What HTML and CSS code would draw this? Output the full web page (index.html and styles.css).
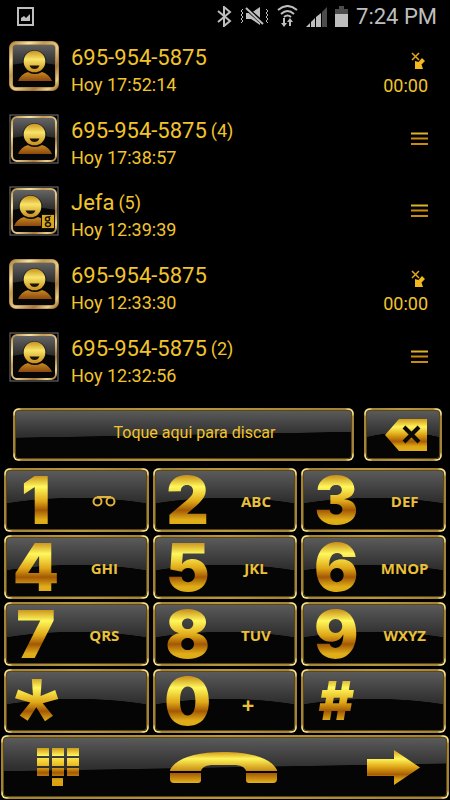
FILE: index.html
```html
<!DOCTYPE html>
<html lang="es">
  <head>
    <meta charset="utf-8">
    <meta name="viewport" content="width=device-width, initial-scale=1">
    <link rel="stylesheet" href="styles.css">
    <title>Teléfono</title>
  </head>
  <body>
    <!-- shared gradients and symbols -->
    <svg class="defs" aria-hidden="true">
      <defs>
        <linearGradient id="gold" x1="0" y1="0" x2="0" y2="1">
          <stop offset="0" stop-color="#d09a18"/>
          <stop offset=".25" stop-color="#fff45a"/>
          <stop offset=".5" stop-color="#dca114"/>
          <stop offset=".7" stop-color="#a85d05"/>
          <stop offset=".85" stop-color="#dba514"/>
          <stop offset="1" stop-color="#e0b01c"/>
        </linearGradient>
        <linearGradient id="keys" gradientUnits="userSpaceOnUse" x1="0" y1="0" x2="0" y2="38">
          <stop offset="0" stop-color="#d09a18"/>
          <stop offset=".2" stop-color="#fff45a"/>
          <stop offset=".48" stop-color="#e8b41a"/>
          <stop offset=".65" stop-color="#a35804"/>
          <stop offset=".85" stop-color="#dba514"/>
          <stop offset="1" stop-color="#d8a010"/>
        </linearGradient>
        <linearGradient id="handset" x1="0" y1="0" x2="0" y2="1">
          <stop offset="0" stop-color="#d09a18"/>
          <stop offset=".35" stop-color="#fff45a"/>
          <stop offset="1" stop-color="#c88a10"/>
        </linearGradient>
        <linearGradient id="handset-ends" x1="0" y1="0" x2="0" y2="1">
          <stop offset="0" stop-color="#a35804"/>
          <stop offset="1" stop-color="#e4b41c"/>
        </linearGradient>
        <linearGradient id="head" x1="0" y1="0" x2="0" y2="1">
          <stop offset="0" stop-color="#c8921e"/>
          <stop offset=".4" stop-color="#f8e468"/>
          <stop offset="1" stop-color="#c98c1c"/>
        </linearGradient>
        <linearGradient id="shoulders" x1="0" y1="0" x2="0" y2="1">
          <stop offset="0" stop-color="#c88a20"/>
          <stop offset="1" stop-color="#8c4810"/>
        </linearGradient>
        <linearGradient id="frame" x1="0" y1="0" x2="1" y2="1">
          <stop offset="0" stop-color="#b08a44"/>
          <stop offset=".2" stop-color="#f6e4a0"/>
          <stop offset=".35" stop-color="#c29a50"/>
          <stop offset=".55" stop-color="#e8cc88"/>
          <stop offset=".75" stop-color="#a8793c"/>
          <stop offset=".9" stop-color="#ecd288"/>
          <stop offset="1" stop-color="#a07434"/>
        </linearGradient>
        <linearGradient id="gloss" x1="0" y1="0" x2="0" y2="1">
          <stop offset="0" stop-color="#686868"/>
          <stop offset=".5" stop-color="#262626"/>
          <stop offset="1" stop-color="#101010"/>
        </linearGradient>
      </defs>
      <symbol id="person" viewBox="0 0 34 31">
        <path d="M0 31Q3 24 10 22Q17 26 24 22Q31 24 34 31Z" fill="url(#shoulders)"/>
        <circle cx="16.500" cy="12" r="12" fill="#0c0c0c" opacity=".5"/>
        <circle cx="16.500" cy="11.500" r="10.800" fill="url(#head)"/>
        <path d="M11.500 15.500H21.500Q20 19 16.500 19Q13 19 11.500 15.500Z" fill="#1b1508"/>
      </symbol>
      <symbol id="avatar" viewBox="0 0 50 50">
        <rect x="2" y="2" width="46" height="46" rx="5" fill="url(#gloss)"/>
        <path d="M2 24Q25 19 48 24V43Q48 48 43 48H7Q2 48 2 43Z" fill="#060606"/>
        <rect x="2" y="2" width="46" height="46" rx="5" fill="none" stroke="#9a7234" stroke-width="4"/>
        <rect x="2" y="2" width="46" height="46" rx="5" fill="none" stroke="url(#frame)" stroke-width="3"/>
        <use href="#person" x="9" y="9" width="34" height="31"/>
      </symbol>
      <symbol id="avatar-boxed" viewBox="0 0 50 50">
        <rect x="1" y="1" width="48" height="48" fill="#000" stroke="#777"/>
        <rect x="3" y="3" width="44" height="44" rx="5" fill="url(#gloss)"/>
        <path d="M3 24Q25 19 47 24V42Q47 47 42 47H8Q3 47 3 42Z" fill="#060606"/>
        <rect x="3" y="3" width="44" height="44" rx="5" fill="none" stroke="url(#frame)" stroke-width="2"/>
      </symbol>
      <symbol id="missed" viewBox="0 0 17 18">
        <path d="M1 1L8 8M8 1L1 8" stroke="#e3a81c" stroke-width="1.500" fill="none"/>
        <path d="M11 6L14 9L10.500 12.500L12 17H4V9L7.500 10Z" fill="#f2b81e"/>
      </symbol>
      <symbol id="menu" viewBox="0 0 17 14">
        <path d="M0 1.500H17" stroke="#dcb42c" stroke-width="2"/>
        <path d="M0 6.500H17M0 12H17" stroke="#c98a10" stroke-width="2"/>
      </symbol>
    </svg>

    <header class="status">
      <svg class="status-picture" width="17" height="19" viewBox="0 0 17 19" aria-hidden="true">
        <rect x="1" y="1" width="15" height="17" fill="none" stroke="#bebebe" stroke-width="2"/>
        <path d="M4 14V11L7 9L9 11L13 7V14Z" fill="#bebebe"/>
      </svg>
      <svg width="15" height="21" viewBox="0 0 15 21" aria-hidden="true">
        <path d="M1 5L13 15L7 20V1L13 6L1 16" fill="none" stroke="#bebebe" stroke-width="2"/>
      </svg>
      <svg width="29" height="20" viewBox="0 0 29 20" aria-hidden="true">
        <path d="M6 7H11L20 1V19L11 13H6Z" fill="#bebebe"/>
        <path d="M6 2L24 18" stroke="#000" stroke-width="4"/>
        <path d="M6 2L23 18" stroke="#bebebe" stroke-width="2"/>
        <path d="M3 3L1 5L3 7L1 9L3 11L1 13L3 15L1 17M26 3L28 5L26 7L28 9L26 11L28 13L26 15L28 17" fill="none" stroke="#bebebe"/>
      </svg>
      <svg width="21" height="22" viewBox="0 0 21 22" aria-hidden="true">
        <path d="M1 5Q10.500-3 20 5M4 9Q10.500 3 17 9M7 12Q10.500 9 14 12" fill="none" stroke="#bebebe" stroke-width="2"/>
        <path d="M8 13V18H10L7 22L4 18H6V13ZM12 21V17H10L13 13L16 17H14V21Z" fill="#bebebe"/>
      </svg>
      <svg width="21" height="21" viewBox="0 0 21 21" aria-hidden="true">
        <path d="M0 21L4 17V21ZM5 16L9 12V21H5ZM10 11L15 7V21H10Z" fill="#bebebe"/>
        <path d="M16 6L21 1V21H16Z" fill="#4c4c4c"/>
      </svg>
      <svg width="13" height="21" viewBox="0 0 13 21" aria-hidden="true">
        <path d="M4 0H9V3H13V8H0V3H4Z" fill="#4c4c4c"/>
        <path d="M0 8H13V21H0Z" fill="#bebebe"/>
      </svg>
      <time>7:24 PM</time>
    </header>

    <ul class="calls">
      <li class="call">
        <svg class="avatar" aria-hidden="true"><use href="#avatar"/></svg>
        <div class="info">
          <p class="name">695-954-5875</p>
          <p class="when">Hoy 17:52:14</p>
        </div>
        <div class="duration">
          <svg width="17" height="18" aria-hidden="true"><use href="#missed"/></svg>
          <span>00:00</span>
        </div>
      </li>
      <li class="call">
        <svg class="avatar" viewBox="0 0 50 50" aria-hidden="true">
          <use href="#avatar-boxed"/>
          <use href="#person" x="9" y="9" width="34" height="31"/>
        </svg>
        <div class="info">
          <p class="name">695-954-5875<span class="count">(4)</span></p>
          <p class="when">Hoy 17:38:57</p>
        </div>
        <button class="more" aria-label="Más"><svg width="17" height="14"><use href="#menu"/></svg></button>
      </li>
      <li class="call">
        <svg class="avatar" viewBox="0 0 50 50" aria-hidden="true">
          <use href="#avatar-boxed"/>
          <use href="#person" x="5" y="9" width="34" height="31"/>
          <rect x="32" y="28" width="14" height="15" fill="#161208"/>
          <rect x="33" y="29" width="12" height="13" fill="#d9a820"/>
          <circle cx="38.500" cy="33" r="2" fill="none" stroke="#1b1508" stroke-width="1.500"/>
          <ellipse cx="39" cy="38.500" rx="2.500" ry="2" fill="none" stroke="#1b1508" stroke-width="1.500"/>
          <path d="M39 31L42 30" stroke="#1b1508"/>
        </svg>
        <div class="info">
          <p class="name">Jefa<span class="count">(5)</span></p>
          <p class="when">Hoy 12:39:39</p>
        </div>
        <button class="more" aria-label="Más"><svg width="17" height="14"><use href="#menu"/></svg></button>
      </li>
      <li class="call">
        <svg class="avatar" aria-hidden="true"><use href="#avatar"/></svg>
        <div class="info">
          <p class="name">695-954-5875</p>
          <p class="when">Hoy 12:33:30</p>
        </div>
        <div class="duration">
          <svg width="17" height="18" aria-hidden="true"><use href="#missed"/></svg>
          <span>00:00</span>
        </div>
      </li>
      <li class="call">
        <svg class="avatar" viewBox="0 0 50 50" aria-hidden="true">
          <use href="#avatar-boxed"/>
          <use href="#person" x="9" y="9" width="34" height="31"/>
        </svg>
        <div class="info">
          <p class="name">695-954-5875<span class="count">(2)</span></p>
          <p class="when">Hoy 12:32:56</p>
        </div>
        <button class="more" aria-label="Más"><svg width="17" height="14"><use href="#menu"/></svg></button>
      </li>
    </ul>

    <form class="display">
      <input class="panel wide number" type="tel" aria-label="Número" placeholder="Toque aqui para discar">
      <button class="panel erase" type="button" aria-label="Borrar">
        <svg width="42" height="32" viewBox="0 0 42 32">
          <path d="M0 16L14 0H42V32H14Z" fill="url(#gold)"/>
          <path d="M19 8L34 23M34 8L19 23" stroke="#0c0a04" stroke-width="4"/>
        </svg>
      </button>
    </form>

    <div class="keypad">
      <button class="panel key"><span class="digit">1</span>
        <span class="letters">
          <svg width="24" height="12" viewBox="0 0 24 12" role="img" aria-label="Buzón de voz">
            <circle cx="5.500" cy="6.500" r="4" fill="none" stroke="#e0b23c" stroke-width="2"/>
            <circle cx="18.500" cy="6.500" r="4" fill="none" stroke="#e0b23c" stroke-width="2"/>
            <path d="M5 2H19" stroke="#e0b23c" stroke-width="2"/>
          </svg>
        </span>
      </button>
      <button class="panel key"><span class="digit">2</span><span class="letters">ABC</span></button>
      <button class="panel key"><span class="digit">3</span><span class="letters">DEF</span></button>
      <button class="panel key"><span class="digit">4</span><span class="letters">GHI</span></button>
      <button class="panel key"><span class="digit">5</span><span class="letters">JKL</span></button>
      <button class="panel key"><span class="digit">6</span><span class="letters">MNOP</span></button>
      <button class="panel key"><span class="digit">7</span><span class="letters">QRS</span></button>
      <button class="panel key"><span class="digit">8</span><span class="letters">TUV</span></button>
      <button class="panel key"><span class="digit">9</span><span class="letters">WXYZ</span></button>
      <button class="panel key"><span class="digit star">*</span></button>
      <button class="panel key"><span class="digit">0</span><span class="letters plus">+</span></button>
      <button class="panel key"><span class="digit hash">#</span></button>
    </div>

    <nav class="panel wide actions">
      <button aria-label="Teclado">
        <svg width="42" height="38" viewBox="0 0 42 38">
          <path d="M0 0H12V8H0ZM15 0H27V8H15ZM30 0H42V8H30ZM0 10H12V18H0ZM15 10H27V18H15ZM30 10H42V18H30ZM0 20H12V28H0ZM15 20H27V28H15ZM30 20H42V28H30ZM15 30H26V38H15Z" fill="url(#keys)"/>
        </svg>
      </button>
      <button aria-label="Llamar">
        <svg width="107" height="31" viewBox="0 0 107 31">
          <path d="M0 18C6 6 26 0 53 0C81 0 101 6 107 18V19H76C75 15 70 13 64 13H43C37 13 32 15 31 19H0Z" fill="url(#handset)"/>
          <path d="M0 21H31V28Q31 31 28 31H4Q0 31 0 27ZM76 21H107V27Q107 31 103 31H79Q76 31 76 28Z" fill="url(#handset-ends)"/>
        </svg>
      </button>
      <button aria-label="Siguiente">
        <svg width="53" height="35" viewBox="0 0 53 35">
          <path d="M0 9H27V0L53 17.500L27 35V26H0Z" fill="url(#gold)"/>
        </svg>
      </button>
    </nav>
  </body>
</html>
```
FILE: styles.css
```css
* {
  box-sizing: border-box;
}

body {
  margin: 0;
  min-height: 100vh;
  display: flex;
  flex-direction: column;
  background: #000;
  color: #f2c42c;
  font-family: Roboto, sans-serif;
}

svg {
  display: block;
}

button {
  padding: 0;
  border: 0;
  background: none;
  color: inherit;
  cursor: pointer;
}

.defs {
  position: absolute;
  width: 0;
  height: 0;
}

/* status bar */
.status {
  height: 30px;
  padding: 2px 13px 0 17px;
  display: flex;
  align-items: center;
  gap: 8px;
  color: #bebebe;
  font-size: 22px;
}

.status-picture {
  margin-right: auto;
}

/* call log */
.calls {
  flex: 1;
  margin: 0;
  padding: 0;
  list-style: none;
  display: grid;
  grid-auto-rows: 1fr;
}

.call {
  padding: 0 22px 0 9px;
  display: flex;
  align-items: center;
  gap: 12px;
}

.avatar {
  width: 50px;
  height: 50px;
}

.info {
  flex: 1;
  padding-top: 10px;
}

.info p {
  margin: 0;
  line-height: 27px;
}

.name {
  display: flex;
  gap: 4px;
  font-size: 22px;
}

.when,
.count,
.duration {
  font-size: 18px;
}

.duration {
  padding-top: 18px;
  display: flex;
  flex-direction: column;
  align-items: flex-end;
  gap: 2px;
  line-height: 27px;
}

/* number display */
.display {
  margin: 15px 8px 7px 13px;
  display: flex;
  gap: 10px;
}

.panel {
  --shade: radial-gradient(120% 100% at 50% 146%, #050505 99%, transparent 100%);
  border: 2px solid transparent;
  border-radius: 6px;
  background:
    var(--shade) padding-box,
    linear-gradient(#5c5c5c, #303030 50%, #202020) padding-box,
    radial-gradient(circle at 3px 3px, #f8e690 2px, transparent 6px) border-box,
    radial-gradient(circle at calc(100% - 3px) 3px, #f8e690 2px, transparent 6px) border-box,
    radial-gradient(circle at 3px calc(100% - 3px), #f8e690 2px, transparent 6px) border-box,
    radial-gradient(circle at calc(100% - 3px) calc(100% - 3px), #f8e690 2px, transparent 6px) border-box,
    linear-gradient(90deg, #a08238, #b8983e 50%, #a08238) border-box;
  box-shadow: inset 0 0 0 1px #5c4616;
}

/* long panels have a flatter, slanted shine */
.wide {
  --shade: linear-gradient(179deg, transparent 50%, #050505 51%);
}

.number {
  flex: 1;
  min-width: 0;
  height: 53px;
  padding: 0 0 4px 22px;
  color: #f2c42c;
  font: 16px Roboto, sans-serif;
  text-align: center;
}

.number::placeholder {
  color: #f2c42c;
  opacity: 1;
}

.erase {
  width: 78px;
  padding-left: 5px;
  display: flex;
  align-items: center;
  justify-content: center;
}

/* keypad */
.keypad {
  padding: 0 4px;
  display: grid;
  grid-template-columns: repeat(3, 1fr);
  gap: 3px 4px;
}

.key {
  height: 64px;
  display: grid;
  grid-template-columns: 66px 1fr;
  align-items: center;
}

.key:nth-child(3n + 1) {
  grid-template-columns: 60px 1fr;
}

.digit {
  height: 60px;
  font: 900 66px/60px Inter, "Liberation Sans", sans-serif;
  text-align: center;
  background: linear-gradient(#c8901a 9%, #fff85c 28%, #e0a818 52%, #a35804 67%, #e0ae18 83%, #dca818);
  -webkit-background-clip: text;
  background-clip: text;
  color: transparent;
}

.digit.star {
  font: 900 96px/88px Roboto, sans-serif;
}

.digit.hash {
  font-size: 54px;
}

.letters {
  padding: 2px 4px 0 0;
  display: flex;
  justify-content: center;
  color: #eac03a;
  font: bold 15px "Open Sans", sans-serif;
}

.letters.plus {
  padding: 6px 20px 0 0;
  font-size: 22px;
}

/* bottom bar */
.actions {
  height: 64px;
  margin: 2px 1px 1px;
  padding: 0 27px 0 34px;
  display: flex;
  align-items: center;
  justify-content: space-between;
}
```
